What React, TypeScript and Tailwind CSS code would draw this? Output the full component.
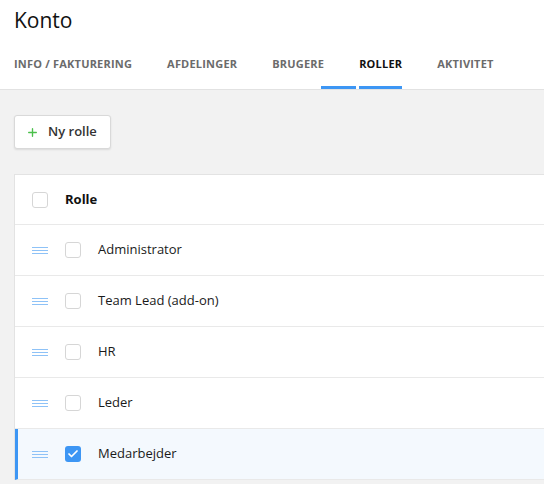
import { Plus, Check } from 'lucide-react'

const tabs = ['INFO / FAKTURERING', 'AFDELINGER', 'BRUGERE', 'ROLLER', 'AKTIVITET']

const roles = [
  { name: 'Administrator', checked: false },
  { name: 'Team Lead (add-on)', checked: false },
  { name: 'HR', checked: false },
  { name: 'Leder', checked: false },
  { name: 'Medarbejder', checked: true },
]

function Box({ checked }: { checked?: boolean }) {
  if (checked) {
    return (
      <span className="shrink-0 w-4 h-4 rounded-[3px] bg-[#3d96f4] flex items-center justify-center">
        <Check className="w-3 h-3 text-white" strokeWidth={3.5} />
      </span>
    )
  }
  return <span className="shrink-0 block w-4 h-4 rounded-[3px] border border-[#d6d6d6] bg-white" />
}

function Handle() {
  return (
    <span className="shrink-0 w-4 flex flex-col gap-[2px]">
      <span className="h-px bg-[#8ec2f7]" />
      <span className="h-px bg-[#8ec2f7]" />
      <span className="h-px bg-[#8ec2f7]" />
    </span>
  )
}

export default function App() {
  return (
    <div className="w-[544px] h-[484px] overflow-hidden bg-[#f2f2f2] text-[#222]" style={{ fontFamily: '"Open Sans", sans-serif' }}>
      <div className="bg-white border-b border-[#e2e2e2]">
        <h1 className="px-[14px] pt-[6px] text-[21px] leading-[28px] text-[#111]">Konto</h1>
        <div className="flex pl-[14px] mt-[21px] h-[34px]">
          {tabs.map(t => (
            <div
              key={t}
              className={`relative mr-[35px] text-[11px] font-bold tracking-[0.2px] leading-[18px] ${t === 'ROLLER' ? 'text-[#111]' : 'text-[#6b6b6b]'}`}
            >
              {t}
              {t === 'ROLLER' && <span className="absolute left-0 right-0 top-[31px] h-[3px] bg-[#3d96f4]" />}
              {t === 'BRUGERE' && <span className="absolute left-[49px] right-[-32px] top-[31px] h-[3px] bg-[#3d96f4]" />}
            </div>
          ))}
        </div>
      </div>

      <div className="pl-[14px] pt-[25px]">
        <button className="flex items-center h-[34px] w-[97px] pl-[11px] bg-white border border-[#d9d9d9] rounded-[3px] shadow-[0_1px_2px_rgba(0,0,0,0.1)] text-[13px] font-semibold text-[#333]">
          <Plus className="w-[13px] h-[13px] text-[#4cc04c] mr-[9px]" strokeWidth={2.5} />
          Ny rolle
        </button>

        <div className="mt-[25px] bg-white border-t border-l border-[#e3e3e3]">
          <div className="flex items-center h-[50px] pl-[17px] border-b border-[#e9e9e9]">
            <Box />
            <span className="ml-[17px] text-[13px] font-bold text-[#111]">Rolle</span>
          </div>
          {roles.map(r => (
            <div
              key={r.name}
              className={`flex items-center h-[51px] border-b border-[#e9e9e9] ${r.checked ? 'bg-[#f4f9fe] border-l-[3px] border-l-[#3d96f4] pl-[14px]' : 'pl-[17px]'}`}
            >
              <Handle />
              <span className="ml-[17px] flex"><Box checked={r.checked} /></span>
              <span className="ml-[17px] text-[13px] text-[#1a1a1a]">{r.name}</span>
            </div>
          ))}
        </div>
      </div>
    </div>
  )
}
